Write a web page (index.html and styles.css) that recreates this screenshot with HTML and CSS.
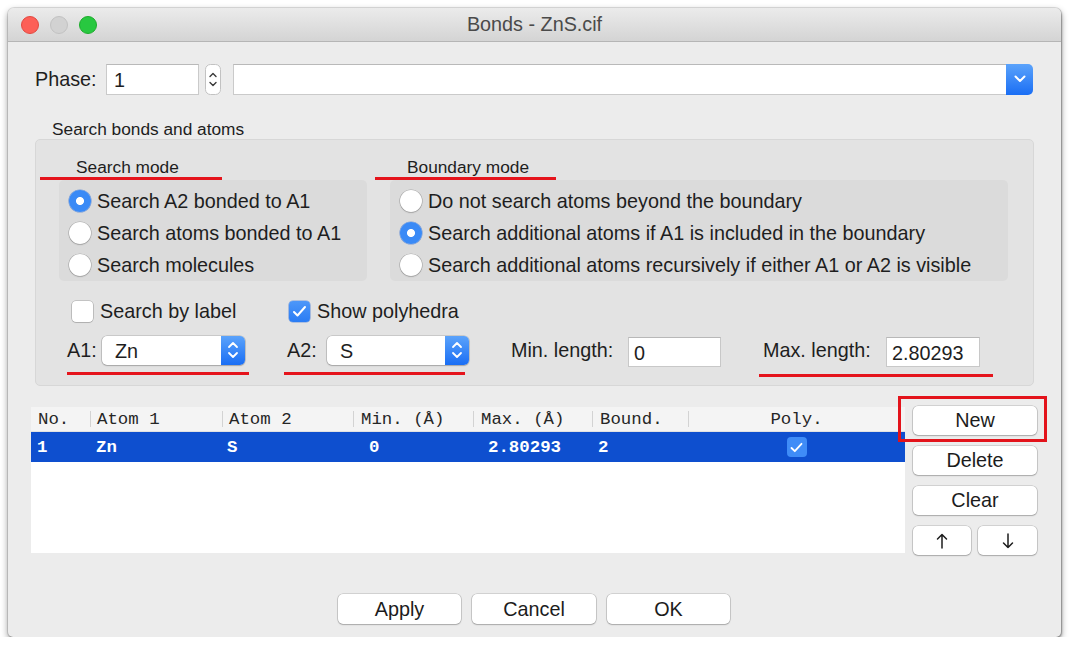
FILE: index.html
```html
<!DOCTYPE html>
<html lang="en">
<head>
<meta charset="utf-8">
<title>Bonds - ZnS.cif</title>
<link rel="stylesheet" href="styles.css">
</head>
<body>
<div class="window">
  <div class="titlebar">
    <div class="lights">
      <span class="light red"></span>
      <span class="light gray"></span>
      <span class="light green"></span>
    </div>
    <div class="title">Bonds - ZnS.cif</div>
    <div></div>
  </div>

  <div class="content">
    <div class="phase-row">
      <span class="label phase-label">Phase:</span>
      <div class="field phase-input">1</div>
      <div class="stepper">
        <svg width="16" height="31" viewBox="0 0 16 31"><rect x="0.5" y="0.5" width="15" height="30" rx="5" fill="#fff" stroke="#c2c2c2"/><path d="M5 12.5 L8 9.5 L11 12.5" fill="none" stroke="#3a3a3a" stroke-width="1.4" stroke-linecap="round" stroke-linejoin="round"/><path d="M5 18.5 L8 21.5 L11 18.5" fill="none" stroke="#3a3a3a" stroke-width="1.4" stroke-linecap="round" stroke-linejoin="round"/></svg>
      </div>
      <div class="combo">
        <div class="combo-field"></div>
        <div class="combo-btn">
          <svg width="12" height="8" viewBox="0 0 12 8"><path d="M1.5 1.5 L6 6 L10.5 1.5" fill="none" stroke="#fff" stroke-width="2" stroke-linecap="round" stroke-linejoin="round"/></svg>
        </div>
      </div>
    </div>

    <div class="group-title">Search bonds and atoms</div>

    <div class="group">
      <div class="mode-titles">
        <div class="mode-title search-title">Search mode</div>
        <div class="mode-title boundary-title">Boundary mode</div>
      </div>

      <div class="mode-boxes">
        <div class="mode-box search-box">
          <div class="radio-row"><span class="radio on"></span>Search A2 bonded to A1</div>
          <div class="radio-row"><span class="radio"></span>Search atoms bonded to A1</div>
          <div class="radio-row"><span class="radio"></span>Search molecules</div>
        </div>
        <div class="mode-box boundary-box">
          <div class="radio-row"><span class="radio"></span>Do not search atoms beyond the boundary</div>
          <div class="radio-row"><span class="radio on"></span>Search additional atoms if A1 is included in the boundary</div>
          <div class="radio-row"><span class="radio"></span>Search additional atoms recursively if either A1 or A2 is visible</div>
        </div>
      </div>

      <div class="check-row">
        <div class="check check-label"><span class="checkbox"></span>Search by label</div>
        <div class="check"><span class="checkbox on"><svg width="15" height="13" viewBox="0 0 15 13"><path d="M2 7 L5.5 10.5 L13 2" fill="none" stroke="#fff" stroke-width="2" stroke-linecap="round" stroke-linejoin="round"/></svg></span>Show polyhedra</div>
      </div>

      <div class="atom-row">
        <div class="pair a1">
          <span class="label a1-label">A1:</span>
          <div class="popup popup-a1">
            <span class="popup-text">Zn</span>
            <span class="popup-btn"><svg width="12" height="20" viewBox="0 0 12 20"><path d="M2 7 L6 3 L10 7" fill="none" stroke="#fff" stroke-width="1.8" stroke-linecap="round" stroke-linejoin="round"/><path d="M2 13 L6 17 L10 13" fill="none" stroke="#fff" stroke-width="1.8" stroke-linecap="round" stroke-linejoin="round"/></svg></span>
          </div>
        </div>
        <div class="pair a2">
          <span class="label a2-label">A2:</span>
          <div class="popup popup-a2">
            <span class="popup-text">S</span>
            <span class="popup-btn"><svg width="12" height="20" viewBox="0 0 12 20"><path d="M2 7 L6 3 L10 7" fill="none" stroke="#fff" stroke-width="1.8" stroke-linecap="round" stroke-linejoin="round"/><path d="M2 13 L6 17 L10 13" fill="none" stroke="#fff" stroke-width="1.8" stroke-linecap="round" stroke-linejoin="round"/></svg></span>
          </div>
        </div>
        <div class="pair minp">
          <span class="label min-label">Min. length:</span>
          <div class="small-input min-input">0</div>
        </div>
        <div class="pair maxp">
          <span class="label max-label">Max. length:</span>
          <div class="small-input max-input">2.80293</div>
        </div>
      </div>
    </div>

    <div class="list-row">
      <div class="table">
        <div class="thead">
          <div class="th first">No.</div>
          <div class="th">Atom 1</div>
          <div class="th">Atom 2</div>
          <div class="th wide">Min. (Å)</div>
          <div class="th wide">Max. (Å)</div>
          <div class="th wide">Bound.</div>
          <div class="th center">Poly.</div>
        </div>
        <div class="trow">
          <div class="td">1</div>
          <div class="td">Zn</div>
          <div class="td s">S</div>
          <div class="td num">0</div>
          <div class="td num">2.80293</div>
          <div class="td">2</div>
          <div class="td center"><span class="row-check"><svg width="13" height="11" viewBox="0 0 13 11"><path d="M1.5 6 L4.8 9.2 L11.5 1.8" fill="none" stroke="#fff" stroke-width="1.8" stroke-linecap="round" stroke-linejoin="round"/></svg></span></div>
        </div>
      </div>
      <div class="side">
        <div class="btn new">New</div>
        <div class="btn">Delete</div>
        <div class="btn">Clear</div>
        <div class="arrows">
          <div class="btn arrow-up" aria-label="Move up"><svg width="12" height="16" viewBox="0 0 12 16"><path d="M6 15 V1.5 M1.5 6 L6 1.5 L10.5 6" fill="none" stroke="#1c1c1c" stroke-width="1.5" stroke-linecap="round" stroke-linejoin="round"/></svg></div>
          <div class="btn arrow-down" aria-label="Move down"><svg width="12" height="16" viewBox="0 0 12 16"><path d="M6 1 V14.5 M1.5 10 L6 14.5 L10.5 10" fill="none" stroke="#1c1c1c" stroke-width="1.5" stroke-linecap="round" stroke-linejoin="round"/></svg></div>
        </div>
      </div>
    </div>

    <div class="footer">
      <div class="btn apply">Apply</div>
      <div class="btn cancel">Cancel</div>
      <div class="btn ok">OK</div>
    </div>
  </div>
</div>
</body>
</html>
```

FILE: styles.css
```css
* { box-sizing: border-box; }

html, body {
  margin: 0;
  padding: 0;
  background: #ffffff;
}

body {
  font-family: "Liberation Sans", Arial, sans-serif;
  color: #1e1e1e;
}

.window {
  margin: 8px 0 0 8px;
  width: 1053px;
  height: 629px;
  background: #ececec;
  border-radius: 6px 6px 5px 5px;
  box-shadow: 0 3px 7px rgba(0, 0, 0, 0.42), 1px 1px 2px rgba(0, 0, 0, 0.25), 0 0 0 1px rgba(0, 0, 0, 0.1);
  overflow: hidden;
  display: flex;
  flex-direction: column;
}

/* Title bar */
.titlebar {
  flex: none;
  height: 34px;
  background: linear-gradient(#ebebeb, #d4d4d4);
  border-bottom: 1px solid #b5b5b5;
  display: grid;
  grid-template-columns: 1fr auto 1fr;
  align-items: center;
  padding: 0 13px;
}

.lights {
  display: flex;
  gap: 11px;
}

.light {
  width: 18px;
  height: 18px;
  border-radius: 50%;
}

.red { background: #fd5f57; border: 1px solid #e2483f; }
.gray { background: #d2d2d2; border: 1px solid #c2c2c2; }
.green { background: #28c840; border: 1px solid #1dac2c; }

.title {
  font-size: 19.8px;
  color: #4a4a4a;
}

/* Content */
.content {
  flex: 1;
  padding: 21px 24px 0 23px;
  display: flex;
  flex-direction: column;
}

.label {
  font-size: 19.8px;
  white-space: nowrap;
}

.phase-row {
  display: flex;
  align-items: center;
  height: 32px;
  margin: 0 4px;
}

.phase-label { width: 71px; }

.field {
  background: #fff;
  border: 1px solid #cacaca;
  border-top-color: #b9b9b9;
  height: 31px;
  font-size: 19.8px;
  padding: 2px 7px 0;
  display: flex;
  align-items: center;
}

.phase-input { width: 93px; }

.stepper {
  margin-left: 6px;
  width: 16px;
  height: 31px;
  display: flex;
}

.combo {
  margin-left: 12px;
  flex: 1;
  height: 31px;
  display: flex;
}

.combo-field {
  flex: 1;
  background: #fff;
  border: 1px solid #cacaca;
  border-top-color: #b9b9b9;
  border-right: none;
}

.combo-btn {
  width: 27px;
  background: linear-gradient(#5ba3fb, #1a6ef4);
  border-radius: 0 5px 5px 0;
  display: flex;
  align-items: center;
  justify-content: center;
}

.group-title {
  margin: 24px 0 0 21px;
  height: 20px;
  line-height: 20px;
  font-size: 17.3px;
}

.group {
  margin: 0 3px 0 4px;
  height: 247px;
  background: #e3e3e3;
  border: 1px solid #d7d7d7;
  border-radius: 5px;
}

.mode-titles {
  display: flex;
  margin-top: 17px;
}

.mode-title {
  height: 23px;
  line-height: 20px;
  font-size: 17.3px;
  border-bottom: 3px solid #e5141c;
  white-space: nowrap;
}

.search-title {
  margin-left: 4px;
  width: 182px;
  padding-left: 36px;
}

.boundary-title {
  margin-left: 153px;
  width: 181px;
  padding-left: 32px;
}

.mode-boxes {
  display: flex;
  gap: 23px;
  margin-left: 23px;
}

.mode-box {
  height: 101px;
  background: #dbdbdb;
  border-radius: 5px;
  padding: 5px 0 0 10px;
}

.search-box { width: 308px; }
.boundary-box { width: 618px; }

.radio-row {
  height: 32px;
  display: flex;
  align-items: center;
  gap: 6px;
  font-size: 19.8px;
  white-space: nowrap;
}

.radio {
  flex: none;
  width: 22px;
  height: 22px;
  border-radius: 50%;
  background: #fff;
  box-shadow: 0 0 0 0.6px rgba(0, 0, 0, 0.22), 0 1px 1.5px rgba(0, 0, 0, 0.15);
}

.radio.on {
  background: radial-gradient(circle, #ffffff 0 3.6px, #3a8af6 4.4px);
  box-shadow: 0 0 0 0.6px rgba(20, 90, 210, 0.5);
}

.check-row {
  display: flex;
  align-items: center;
  height: 30px;
  margin-top: 15px;
}

.check {
  display: flex;
  align-items: center;
  gap: 7px;
  font-size: 19.8px;
  white-space: nowrap;
}

.check-label {
  margin-left: 36px;
  width: 217px;
}

.checkbox {
  flex: none;
  width: 21px;
  height: 21px;
  border-radius: 4px;
  background: #fff;
  box-shadow: 0 0 0 0.6px rgba(0, 0, 0, 0.28), 0 1px 1px rgba(0, 0, 0, 0.1);
  display: flex;
  align-items: center;
  justify-content: center;
}

.checkbox.on {
  background: linear-gradient(#4d97f9, #2a7cf4);
  box-shadow: 0 0 0 0.6px rgba(20, 90, 210, 0.5);
}

.atom-row {
  display: flex;
  align-items: center;
  height: 30px;
  margin-top: 9px;
}

.pair {
  position: relative;
  display: flex;
  align-items: center;
}

.pair::after {
  content: "";
  position: absolute;
  bottom: -10px;
  height: 3px;
  background: #e5141c;
}

.a1 { margin-left: 31px; }
.a1::after { left: 0; width: 182px; }
.a1-label { width: 35px; }

.a2 { margin-left: 42px; }
.a2::after { left: -3px; width: 181px; }
.a2-label { width: 40px; }

.minp { margin-left: 42px; }
.minp::after { display: none; }
.min-label { width: 117px; }

.maxp { margin-left: 42px; }
.maxp::after { left: -4px; width: 234px; }
.max-label { width: 123px; }

.popup {
  height: 29px;
  display: flex;
  background: #fff;
  border-radius: 5px;
  box-shadow: 0 0 0 0.6px rgba(0, 0, 0, 0.22), 0 1px 1.5px rgba(0, 0, 0, 0.18);
  overflow: hidden;
}

.popup-a1 { width: 143px; }
.popup-a2 { width: 142px; }

.popup-text {
  flex: 1;
  padding-left: 13px;
  font-size: 19.8px;
  line-height: 30px;
}

.popup-btn {
  width: 24px;
  background: linear-gradient(#5ba3fb, #1a6ef4);
  display: flex;
  align-items: center;
  justify-content: center;
}

.small-input {
  height: 30px;
  background: #fff;
  border: 1px solid #c8c8c8;
  border-top-color: #b8b8b8;
  padding: 3px 0 0 5px;
  font-size: 19.8px;
  display: flex;
  align-items: center;
  margin-top: 3px;
}

.min-input { width: 93px; }
.max-input { width: 94px; }

/* List */
.list-row {
  display: flex;
  align-items: flex-start;
  gap: 8px;
  margin-top: 20px;
}

.table {
  margin-top: 1px;
  width: 874px;
  height: 146px;
  background: #fff;
  font-family: "Liberation Mono", "Courier New", monospace;
  font-size: 17.4px;
}

.thead,
.trow {
  display: grid;
  grid-template-columns: 59px 132px 131px 120px 119px 96px 1fr;
  align-items: center;
}

.thead {
  height: 25px;
  background: #f4f4f4;
  border-bottom: 1px solid #e2e2e2;
  color: #262626;
}

.th {
  height: 24px;
  line-height: 26px;
  padding-left: 7px;
  white-space: nowrap;
  background: linear-gradient(#d3d3d3, #d3d3d3) no-repeat 0 50% / 1px 16px;
}

.th.first { background: none; }
.th.wide { padding-left: 8px; }
.th.center { padding-left: 0; text-align: center; }

.trow {
  height: 30px;
  background: #0e4fcf;
  color: #ffffff;
  font-weight: bold;
}

.td {
  padding-left: 6px;
  white-space: nowrap;
}

.td.s { padding-left: 5px; }
.td.num { padding-left: 16px; }
.td.num + .td.num { padding-left: 15px; }
.td.center {
  padding-left: 0;
  display: flex;
  justify-content: center;
}

.row-check {
  width: 20px;
  height: 20px;
  border-radius: 4px;
  background: #3f8cf7;
  display: flex;
  align-items: center;
  justify-content: center;
}

.side {
  width: 124px;
  display: flex;
  flex-direction: column;
  gap: 11px;
}

.btn {
  height: 29px;
  background: #fff;
  border-radius: 5px;
  box-shadow: 0 0 0 0.6px rgba(0, 0, 0, 0.22), 0 1px 1.5px rgba(0, 0, 0, 0.2);
  font-size: 19.8px;
  color: #1c1c1c;
  display: flex;
  align-items: center;
  justify-content: center;
  white-space: nowrap;
}

.new { position: relative; }

.new::after {
  content: "";
  position: absolute;
  left: -15px;
  right: -10px;
  top: -10px;
  bottom: -7px;
  border: 3px solid #e3131b;
}

.arrows {
  display: flex;
  gap: 7px;
}

.arrow-up { width: 58px; }
.arrow-down { width: 59px; }

.footer {
  display: flex;
  justify-content: center;
  gap: 11px;
  margin-top: 39px;
}

.footer .btn { height: 30px; }
.apply { width: 123px; }
.cancel { width: 124px; }
.ok { width: 123px; }
```
